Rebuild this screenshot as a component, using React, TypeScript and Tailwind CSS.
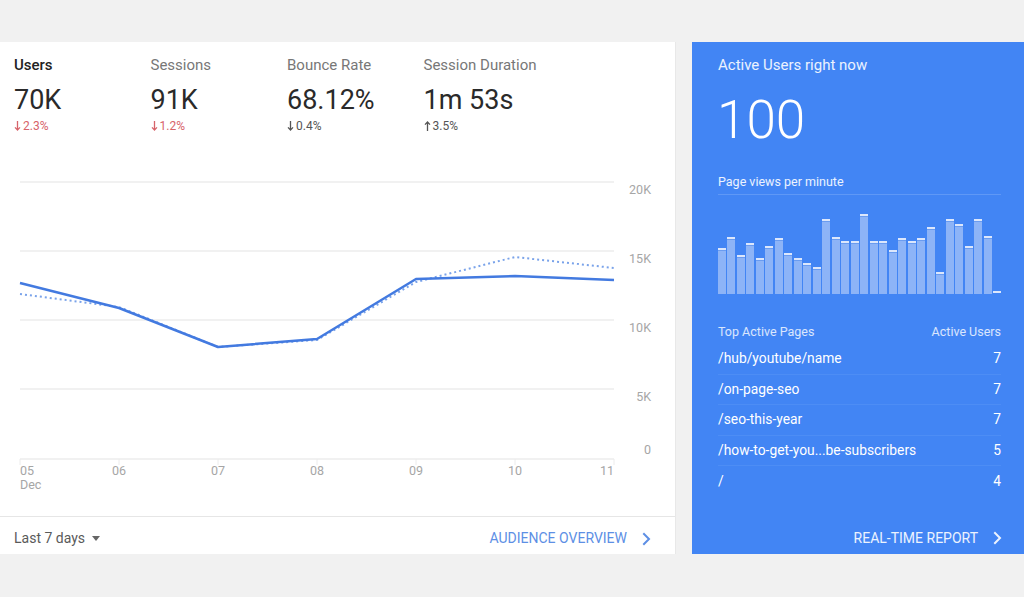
import React from "react";

const metrics = [
  { label: "Users", value: "70K", delta: "2.3%", dir: "down", red: true, active: true },
  { label: "Sessions", value: "91K", delta: "1.2%", dir: "down", red: true, active: false },
  { label: "Bounce Rate", value: "68.12%", delta: "0.4%", dir: "down", red: false, active: false },
  { label: "Session Duration", value: "1m 53s", delta: "3.5%", dir: "up", red: false, active: false },
];

const barTops = [248, 237, 255, 243, 258, 246, 238, 253, 258, 263, 267, 219, 237, 241, 241, 214, 241, 241, 250, 238, 241, 238, 227, 272, 219, 224, 246, 219, 236];

const pages = [
  { path: "/hub/youtube/name", n: 7 },
  { path: "/on-page-seo", n: 7 },
  { path: "/seo-this-year", n: 7 },
  { path: "/how-to-get-you...be-subscribers", n: 5 },
  { path: "/", n: 4 },
];

const xs = [20, 119, 218, 317, 416, 515, 614];
const solid = [113, 138, 177, 169, 109, 106, 110];
const dotted = [124, 137, 177, 170, 112, 87, 98];
const grid = [12, 81, 150, 219, 289];
const yLabels = [
  { t: "20K", y: 24 },
  { t: "15K", y: 93 },
  { t: "10K", y: 162 },
  { t: "5K", y: 231 },
  { t: "0", y: 284 },
];
const xLabels = ["05", "06", "07", "08", "09", "10", "11"];

function Chevron({ className }: { className?: string }) {
  return (
    <svg width="9" height="14" viewBox="0 0 9 14" className={className}>
      <path d="M2 2 L7 7 L2 12" fill="none" stroke="currentColor" strokeWidth="2" strokeLinecap="square" />
    </svg>
  );
}

function Arrow({ dir }: { dir: string }) {
  return (
    <svg width="7" height="10" viewBox="0 0 7 10" className="mr-[2px]">
      {dir === "down" ? (
        <path d="M3.5 0 V9 M1 6.4 L3.5 9 L6 6.4" fill="none" stroke="currentColor" strokeWidth="1.3" />
      ) : (
        <path d="M3.5 10 V1 M1 3.6 L3.5 1 L6 3.6" fill="none" stroke="currentColor" strokeWidth="1.3" />
      )}
    </svg>
  );
}

export default function App() {
  return (
    <div className="w-[1024px] h-[597px] bg-[#f1f1f1] pt-[42px] font-['Roboto',sans-serif] overflow-hidden">
      <div className="flex h-[512px] gap-[16px]">
        {/* Left panel */}
        <div className="w-[676px] bg-white flex flex-col border-r border-[#e8e8e8]">
          <div className="flex pl-[14px] pt-[13px] h-[128px]">
            {metrics.map((m) => (
              <div key={m.label} className="w-[136.5px] flex flex-col">
                <div className={`text-[15px] leading-[20px] ${m.active ? "text-[#222] font-medium" : "text-[#777]"}`}>{m.label}</div>
                <div className="text-[27px] leading-[32px] mt-[9px] text-[#2a2a2a]">{m.value}</div>
                <div className={`flex items-center text-[12px] leading-[14px] mt-[3px] ${m.red ? "text-[#d7636a]" : "text-[#555]"}`}>
                  <Arrow dir={m.dir} />
                  {m.delta}
                </div>
              </div>
            ))}
          </div>
          <svg width="676" height="346" viewBox="0 0 676 346" className="block">
            {grid.map((y) => (
              <line key={y} x1="20" x2="614" y1={y} y2={y} stroke="#ececec" strokeWidth="1.5" />
            ))}
            {xs.map((x) => (
              <line key={x} x1={x} x2={x} y1="289" y2="295" stroke="#ececec" strokeWidth="1" />
            ))}
            {yLabels.map((l) => (
              <text key={l.t} x="651" y={l.y} textAnchor="end" fontSize="12.5" fill="#a6a6a6" fontFamily="Roboto, sans-serif">
                {l.t}
              </text>
            ))}
            {xLabels.map((t, i) => (
              <text
                key={t}
                x={xs[i]}
                y="305"
                textAnchor={i === 0 ? "start" : i === 6 ? "end" : "middle"}
                fontSize="12.5"
                fill="#a6a6a6"
                fontFamily="Roboto, sans-serif"
              >
                {t}
              </text>
            ))}
            <text x="20" y="319" fontSize="12.5" fill="#a6a6a6" fontFamily="Roboto, sans-serif">
              Dec
            </text>
            <polyline
              points={xs.map((x, i) => `${x},${dotted[i]}`).join(" ")}
              fill="none"
              stroke="#7aa3ea"
              strokeWidth="2"
              strokeDasharray="2 3"
            />
            <polyline
              points={xs.map((x, i) => `${x},${solid[i]}`).join(" ")}
              fill="none"
              stroke="#437ae0"
              strokeWidth="2.5"
              strokeLinejoin="round"
            />
          </svg>
          <div className="flex-1 border-t border-[#e6e6e6] flex items-center justify-between pl-[14px] pr-[24px] pt-[6px]">
            <div className="flex items-center text-[14px] text-[#5a5a5a]">
              Last 7 days
              <svg width="8" height="5" viewBox="0 0 8 5" className="ml-[7px]">
                <path d="M0 0 H8 L4 5 Z" fill="#666" />
              </svg>
            </div>
            <div className="flex items-center text-[14px] text-[#5d8fe5]">
              AUDIENCE OVERVIEW
              <Chevron className="ml-[15px]" />
            </div>
          </div>
        </div>

        {/* Right panel */}
        <div className="flex-1 bg-[#4285f4] flex flex-col pl-[26px] pr-[23px] text-white">
          <div className="text-[15px] leading-[20px] mt-[13px] text-white/90">Active Users right now</div>
          <div className="text-[53px] leading-[60px] font-light mt-[15px] -ml-[1px]">100</div>
          <div className="text-[12.5px] leading-[16px] mt-[24px] text-white/90 pb-[4px] border-b border-[#5f98f6]">Page views per minute</div>
          <div className="h-[80px] mt-[19px] flex items-end gap-[1.5px]">
            {barTops.map((t, i) => (
              <div key={i} className="flex-1 flex flex-col" style={{ height: `${294 - t}px` }}>
                <div className="h-[2px] bg-[#dce7fc]" />
                <div className="h-[1px] bg-[#6a9cf0]" />
                <div className="flex-1 bg-[#8db4f7]" />
              </div>
            ))}
            <div className="flex-1 flex flex-col h-[3px]">
              <div className="h-[2px] bg-[#dce7fc]" />
            </div>
          </div>
          <div className="flex justify-between text-[12.5px] leading-[16px] mt-[30px] text-white/80">
            <span>Top Active Pages</span>
            <span>Active Users</span>
          </div>
          <div className="mt-[4px] flex flex-col">
            {pages.map((p, i) => (
              <div
                key={p.path}
                className={`h-[30.5px] flex items-center justify-between text-[13.8px] ${i < 4 ? "border-b border-[#4d8df5]" : ""}`}
              >
                <span>{p.path}</span>
                <span>{p.n}</span>
              </div>
            ))}
          </div>
          <div className="mt-auto h-[38px] pt-[6px] flex items-center justify-end text-[14px] text-white/90">
            REAL-TIME REPORT
            <Chevron className="ml-[15px] -mr-[1px]" />
          </div>
        </div>
      </div>
    </div>
  );
}
